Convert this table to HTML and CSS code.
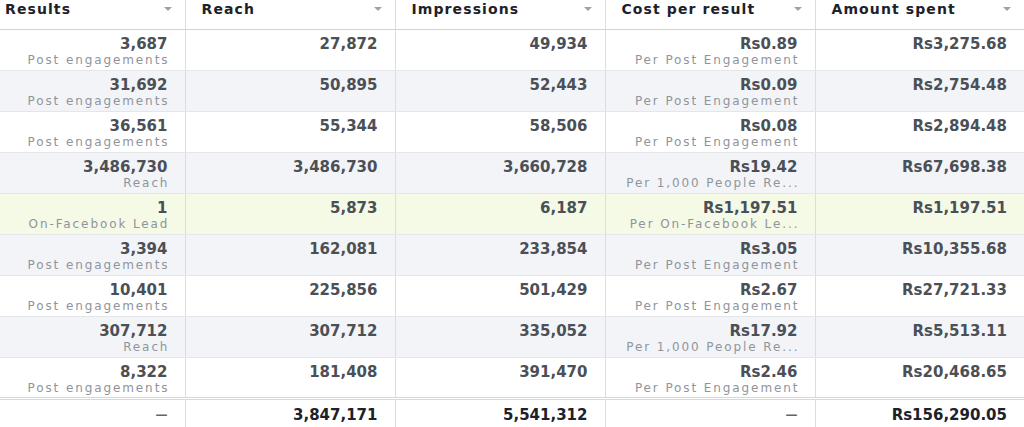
FILE: index.html
```html
<!DOCTYPE html>
<html>
<head>
<meta charset="utf-8">
<link rel="stylesheet" href="styles.css">
</head>
<body>
<table class="report">
  <colgroup>
    <col class="c1"><col class="c2"><col class="c3"><col class="c4"><col class="c5">
  </colgroup>
  <thead>
    <tr>
      <th class="first"><div class="hd"><span>Results</span><i class="caret"></i></div></th>
      <th><div class="hd"><span>Reach</span><i class="caret"></i></div></th>
      <th><div class="hd"><span>Impressions</span><i class="caret"></i></div></th>
      <th><div class="hd"><span>Cost per result</span><i class="caret"></i></div></th>
      <th><div class="hd"><span>Amount spent</span><i class="caret"></i></div></th>
    </tr>
  </thead>
  <tbody>
    <tr>
      <td><div class="v">3,687</div><div class="s">Post engagements</div></td>
      <td><div class="v">27,872</div></td>
      <td><div class="v">49,934</div></td>
      <td><div class="v">Rs0.89</div><div class="s">Per Post Engagement</div></td>
      <td><div class="v">Rs3,275.68</div></td>
    </tr>
    <tr class="alt">
      <td><div class="v">31,692</div><div class="s">Post engagements</div></td>
      <td><div class="v">50,895</div></td>
      <td><div class="v">52,443</div></td>
      <td><div class="v">Rs0.09</div><div class="s">Per Post Engagement</div></td>
      <td><div class="v">Rs2,754.48</div></td>
    </tr>
    <tr>
      <td><div class="v">36,561</div><div class="s">Post engagements</div></td>
      <td><div class="v">55,344</div></td>
      <td><div class="v">58,506</div></td>
      <td><div class="v">Rs0.08</div><div class="s">Per Post Engagement</div></td>
      <td><div class="v">Rs2,894.48</div></td>
    </tr>
    <tr class="alt">
      <td><div class="v">3,486,730</div><div class="s">Reach</div></td>
      <td><div class="v">3,486,730</div></td>
      <td><div class="v">3,660,728</div></td>
      <td><div class="v">Rs19.42</div><div class="s">Per 1,000 People Re...</div></td>
      <td><div class="v">Rs67,698.38</div></td>
    </tr>
    <tr class="hl">
      <td><div class="v">1</div><div class="s">On-Facebook Lead</div></td>
      <td><div class="v">5,873</div></td>
      <td><div class="v">6,187</div></td>
      <td><div class="v">Rs1,197.51</div><div class="s">Per On-Facebook Le...</div></td>
      <td><div class="v">Rs1,197.51</div></td>
    </tr>
    <tr class="alt">
      <td><div class="v">3,394</div><div class="s">Post engagements</div></td>
      <td><div class="v">162,081</div></td>
      <td><div class="v">233,854</div></td>
      <td><div class="v">Rs3.05</div><div class="s">Per Post Engagement</div></td>
      <td><div class="v">Rs10,355.68</div></td>
    </tr>
    <tr>
      <td><div class="v">10,401</div><div class="s">Post engagements</div></td>
      <td><div class="v">225,856</div></td>
      <td><div class="v">501,429</div></td>
      <td><div class="v">Rs2.67</div><div class="s">Per Post Engagement</div></td>
      <td><div class="v">Rs27,721.33</div></td>
    </tr>
    <tr class="alt">
      <td><div class="v">307,712</div><div class="s">Reach</div></td>
      <td><div class="v">307,712</div></td>
      <td><div class="v">335,052</div></td>
      <td><div class="v">Rs17.92</div><div class="s">Per 1,000 People Re...</div></td>
      <td><div class="v">Rs5,513.11</div></td>
    </tr>
    <tr>
      <td><div class="v">8,322</div><div class="s">Post engagements</div></td>
      <td><div class="v">181,408</div></td>
      <td><div class="v">391,470</div></td>
      <td><div class="v">Rs2.46</div><div class="s">Per Post Engagement</div></td>
      <td><div class="v">Rs20,468.65</div></td>
    </tr>
  </tbody>
  <tfoot>
    <tr>
      <td><div class="v dash">—</div></td>
      <td><div class="v">3,847,171</div></td>
      <td><div class="v">5,541,312</div></td>
      <td><div class="v dash">—</div></td>
      <td><div class="v">Rs156,290.05</div></td>
    </tr>
  </tfoot>
</table>
</body>
</html>
```

FILE: styles.css
```css
html, body {
  margin: 0;
  padding: 0;
  background: #ffffff;
  overflow: hidden;
}
body {
  width: 1024px;
  height: 427px;
  font-family: "DejaVu Sans", "Liberation Sans", sans-serif;
}
.report {
  border-collapse: collapse;
  table-layout: fixed;
  width: 1024px;
}
.c1 { width: 185px; }
.c2, .c3, .c4 { width: 210px; }
.c5 { width: 209px; }

.report th {
  height: 29px;
  padding: 0 17px 0 16px;
  vertical-align: top;
  text-align: left;
  border-left: 1px solid #dadde1;
  border-bottom: 1px solid #cfd2d7;
  background: #fff;
}
.report th.first {
  padding-left: 5px;
  border-left: none;
}
.hd {
  display: flex;
  align-items: center;
  justify-content: space-between;
  height: 18px;
  font-size: 14px;
  font-weight: bold;
  color: #1d2129;
  letter-spacing: 1.1px;
}
.caret {
  width: 0;
  height: 0;
  border-left: 4px solid transparent;
  border-right: 4px solid transparent;
  border-top: 4px solid #9ea3ab;
  margin-right: -4px;
}

.report td {
  height: 35px;
  padding: 5px 17px 0 10px;
  vertical-align: top;
  text-align: right;
  border-left: 1px solid #dadde1;
  border-bottom: 1px solid #e4e6ea;
}
.report td:first-child { border-left: none; }
.report tbody tr.alt td { background: #f2f4f8; }
.report tbody tr.hl td { background: #f4fae6; }

.v {
  font-size: 15px;
  line-height: 18px;
  font-weight: bold;
  color: #4b4f56;
  white-space: nowrap;
}
.s {
  font-size: 12px;
  line-height: 15px;
  color: #90949c;
  letter-spacing: 1.9px;
  margin-right: -1.9px;
  white-space: nowrap;
}
.report tbody tr:last-child td {
  height: 34px;
  border-bottom: 3px double #d5d8dc;
}
.report tfoot td {
  height: 22px;
  padding-top: 6px;
  border-bottom: none;
}
.report tfoot .v { color: #1d2129; }
.report tfoot .dash {
  color: #606770;
  font-size: 12px;
  font-weight: bold;
}
```
